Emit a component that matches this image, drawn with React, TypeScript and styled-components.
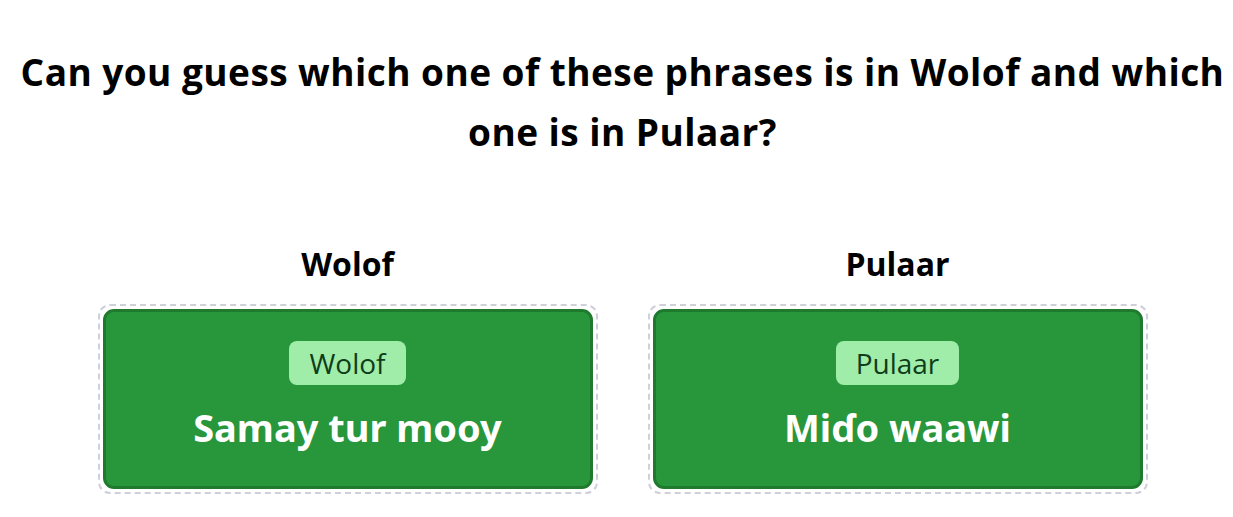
import React from "react";
import styled, { createGlobalStyle } from "styled-components";

const GlobalStyle = createGlobalStyle`
  body {
    margin: 0;
    background: #ffffff;
    font-family: "Open Sans", "Noto Sans", "Liberation Sans", sans-serif;
    color: #000;
  }
`;

type Phrase = {
  language: string;
  text: string;
};

const phrases: Phrase[] = [
  { language: "Wolof", text: "Samay tur mooy" },
  { language: "Pulaar", text: "Miɗo waawi" },
];

const Page = styled.div`
  padding: 42px 8px 20px 20px;
  display: flex;
  flex-direction: column;
  align-items: center;
`;

const Title = styled.h1`
  margin: 0;
  font-size: 37px;
  line-height: 60px;
  font-weight: 700;
  text-align: center;
  letter-spacing: 0.45px;
`;

const Columns = styled.div`
  margin-top: 82px;
  display: flex;
  gap: 50px;
  justify-content: center;
`;

const Column = styled.div`
  width: 500px;
  display: flex;
  flex-direction: column;
  align-items: center;
`;

const Label = styled.h2`
  margin: 0;
  font-size: 32px;
  line-height: 40px;
  font-weight: 700;
`;

const DropZone = styled.div`
  margin-top: 20px;
  width: 100%;
  box-sizing: border-box;
  border: 2px dashed #cfd0d9;
  border-radius: 12px;
  padding: 3px;
`;

const Card = styled.div`
  box-sizing: border-box;
  height: 180px;
  background: #28963a;
  border: 3px solid #1f7a2e;
  border-radius: 11px;
  display: flex;
  flex-direction: column;
  align-items: center;
  padding-top: 29px;
`;

const Badge = styled.span`
  display: inline-block;
  background: #a0eca9;
  color: #0f3d1a;
  border-radius: 8px;
  padding: 0 20px;
  height: 44px;
  line-height: 44px;
  font-size: 28px;
  font-weight: 400;
`;

const PhraseText = styled.div`
  margin-top: 18px;
  color: #ffffff;
  font-family: "Noto Sans", "Open Sans", sans-serif;
  font-size: 38px;
  line-height: 48px;
  font-weight: 700;
`;

export default function App() {
  return (
    <>
      <GlobalStyle />
      <Page>
        <Title>
          Can you guess which one of these phrases is in Wolof and which one is
          in Pulaar?
        </Title>
        <Columns>
          {phrases.map((p) => (
            <Column key={p.language}>
              <Label>{p.language}</Label>
              <DropZone>
                <Card>
                  <Badge>{p.language}</Badge>
                  <PhraseText>{p.text}</PhraseText>
                </Card>
              </DropZone>
            </Column>
          ))}
        </Columns>
      </Page>
    </>
  );
}
